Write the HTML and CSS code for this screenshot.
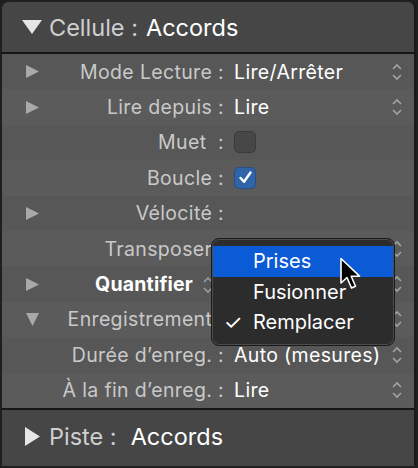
FILE: index.html
```html
<!DOCTYPE html>
<html lang="fr">
<head>
<meta charset="utf-8">
<link rel="stylesheet" href="styles.css">
</head>
<body>
<div class="panel">
  <div class="head">
    <svg class="head-tri" width="20" height="14" viewBox="0 0 20 14"><path d="M0 0H20L10 14Z"/></svg>
    <span class="hk">Cellule :</span><span class="hv">Accords</span>
  </div>
  <div class="rows">
    <div class="row">
      <svg class="disc" width="13" height="13" viewBox="0 0 13 13"><path d="M0 0L13 6.5L0 13Z"/></svg>
      <span class="label">Mode Lecture :</span><span class="value">Lire/Arrêter</span>
      <svg class="step" width="12" height="18" viewBox="0 0 12 18"><path d="M2 6L6 2L10 6M2 12L6 16L10 12"/></svg>
    </div>
    <div class="row alt">
      <svg class="disc" width="13" height="13" viewBox="0 0 13 13"><path d="M0 0L13 6.5L0 13Z"/></svg>
      <span class="label">Lire depuis :</span><span class="value">Lire</span>
      <svg class="step" width="12" height="18" viewBox="0 0 12 18"><path d="M2 6L6 2L10 6M2 12L6 16L10 12"/></svg>
    </div>
    <div class="row">
      <span class="label">Muet&nbsp; :</span><span class="value"><span class="cb"></span></span>
    </div>
    <div class="row alt">
      <span class="label">Boucle :</span><span class="value"><span class="cb on"><svg width="21" height="21" viewBox="0 0 21 21"><path d="M5.5 11L9 14.8L15.5 5.5"/></svg></span></span>
    </div>
    <div class="row">
      <svg class="disc" width="13" height="13" viewBox="0 0 13 13"><path d="M0 0L13 6.5L0 13Z"/></svg>
      <span class="label">Vélocité :</span><span class="value"></span>
    </div>
    <div class="row alt">
      <span class="label">Transposer :</span><span class="value"></span>
      <svg class="step" width="12" height="18" viewBox="0 0 12 18"><path d="M2 6L6 2L10 6M2 12L6 16L10 12"/></svg>
    </div>
    <div class="row">
      <svg class="disc" width="13" height="13" viewBox="0 0 13 13"><path d="M0 0L13 6.5L0 13Z"/></svg>
      <span class="label bold">Quantifier<svg class="istep" width="12" height="18" viewBox="0 0 12 18"><path d="M2 6L6 2L10 6M2 12L6 16L10 12"/></svg></span><span class="value"></span>
      <svg class="step" width="12" height="18" viewBox="0 0 12 18"><path d="M2 6L6 2L10 6M2 12L6 16L10 12"/></svg>
    </div>
    <div class="row alt">
      <svg class="disc" width="13" height="13" viewBox="0 0 13 13"><path d="M0 0L13 0L6.5 13Z"/></svg>
      <span class="label">Enregistrement :</span><span class="value"></span>
      <svg class="step" width="12" height="18" viewBox="0 0 12 18"><path d="M2 6L6 2L10 6M2 12L6 16L10 12"/></svg>
    </div>
    <div class="row">
      <span class="label">Durée d’enreg. :</span><span class="value">Auto (mesures)</span>
      <svg class="step" width="12" height="18" viewBox="0 0 12 18"><path d="M2 6L6 2L10 6M2 12L6 16L10 12"/></svg>
    </div>
    <div class="row alt">
      <span class="label">À la fin d’enreg. :</span><span class="value">Lire</span>
      <svg class="step" width="12" height="18" viewBox="0 0 12 18"><path d="M2 6L6 2L10 6M2 12L6 16L10 12"/></svg>
    </div>
  </div>
  <div class="head foot">
    <svg class="head-tri" width="15" height="19" viewBox="0 0 15 19"><path d="M0 0L15 9.5L0 19Z"/></svg>
    <span class="hk">Piste :</span><span class="hv">Accords</span>
  </div>

  <div class="menu">
    <div class="item sel"><span class="chk"></span>Prises</div>
    <div class="item"><span class="chk"></span>Fusionner</div>
    <div class="item"><span class="chk">✓</span>Remplacer</div>
  </div>
  <svg class="cursor" width="24" height="34" viewBox="0 0 24 34"><path d="M2 1.5V26L8 20.5L12.5 31L16.5 29.3L12.2 19.2H20.5Z"/></svg>
</div>
</body>
</html>
```
FILE: styles.css
```css
html, body { margin: 0; padding: 0; }
body {
  width: 418px;
  height: 468px;
  background: #1f1f1f;
  font-family: "Inter", "Roboto", "Liberation Sans", sans-serif;
  overflow: hidden;
}
.panel {
  position: relative;
  margin: 2px 0 0 2px;
  width: 412px;
  height: 464px;
  border-right: 2px solid #1a1a1a;
  border-radius: 7px 7px 0 0;
  background: #444;
  display: flex;
  flex-direction: column;
}
.head {
  height: 50px;
  display: flex;
  align-items: center;
  padding-left: 20px;
  font-size: 23.5px;
  background: #464646;
  border-radius: 7px 7px 0 0;
}
.head-tri { fill: #e6e6e6; margin-right: 7px; }
.hk { color: #cfcfcf; margin-right: 8px; }
.hv { color: #fff; }
.foot {
  height: 54px;
  border-radius: 0;
  border-top: 2px solid #161616;
  padding-left: 23px;
}
.foot .head-tri { margin-right: 9px; }
.foot .hk { margin-right: 14px; }
.rows {
  border-top: 2px solid #161616;
  display: flex;
  flex-direction: column;
}
.row {
  height: 35.4px;
  display: grid;
  grid-template-columns: 46px 176px 1fr 30px;
  align-items: center;
  background: #575757;
  font-size: 19.5px;
  letter-spacing: 0.35px;
}
.row.alt { background: #5b5b5b; }
.disc { grid-column: 1; fill: #a9a9a9; margin-left: 24px; }
.label {
  grid-column: 2;
  text-align: right;
  color: #c9c9c9;
  white-space: nowrap;
}
.label.bold { color: #fff; font-weight: 700; letter-spacing: 0.2px; padding-right: 10px; }
.istep { stroke: #9a9a9a; stroke-width: 1.6; fill: none; vertical-align: -3px; margin-left: 9px; }
.value {
  grid-column: 3;
  color: #fff;
  padding-left: 10px;
  display: flex;
  align-items: center;
  white-space: nowrap;
}
.step {
  grid-column: 4;
  stroke: #a3a3a3;
  stroke-width: 1.6;
  fill: none;
  margin-left: 7px;
}
.cb {
  width: 20px;
  height: 20px;
  border-radius: 5px;
  background: #474747;
  border: 1px solid #3a3a3a;
  display: block;
}
.cb.on { background: #2f65a8; border-color: #284f82; position: relative; }
.cb.on svg { position: absolute; left: -0.5px; top: -0.5px; stroke: #fff; stroke-width: 2.4; fill: none; stroke-linecap: round; stroke-linejoin: round; }
.menu {
  position: absolute;
  left: 209px;
  top: 236px;
  width: 182px;
  padding: 7px 0;
  background: #2c2c2c;
  border: 1px solid #1a1a1a;
  box-shadow: inset 0 0 0 1px #4c4c4c;
  border-radius: 8px;
  font-size: 20px;
  color: #fff;
}
.item {
  height: 30.5px;
  display: flex;
  align-items: center;
  margin: 0 1px;
}
.item.sel { background: #0b5ad6; }
.chk { width: 40px; text-align: center; padding-left: 0; box-sizing: border-box; font-size: 21px; }
.cursor {
  position: absolute;
  left: 337px;
  top: 255px;
  fill: #000;
  stroke: #fff;
  stroke-width: 1.6;
  stroke-linejoin: round;
}
```
